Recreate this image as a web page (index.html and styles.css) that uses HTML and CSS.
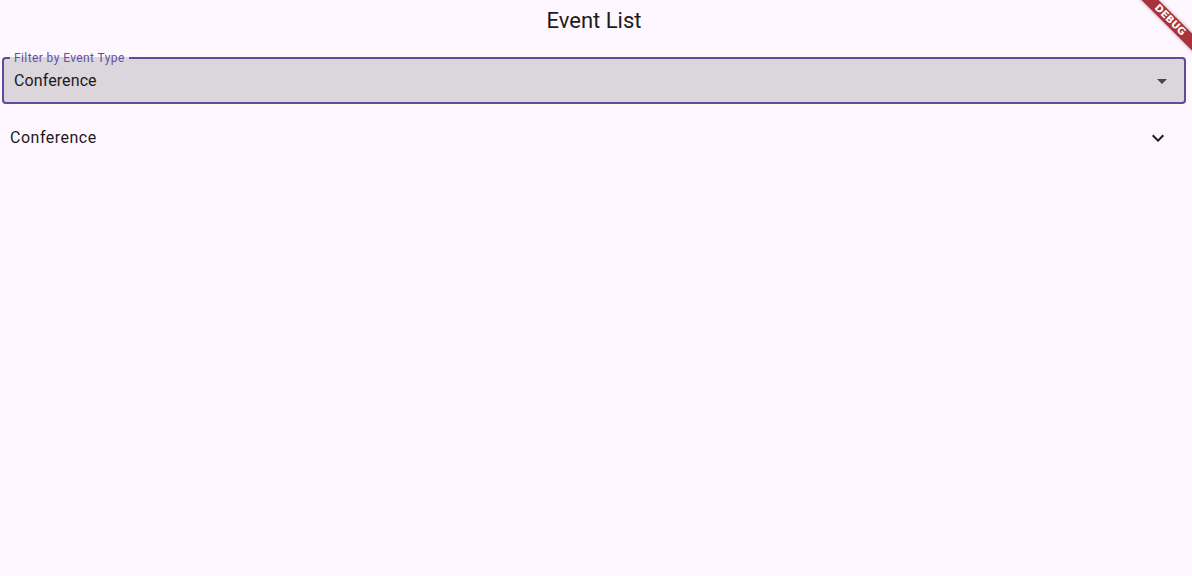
FILE: index.html
```html
<!DOCTYPE html>
<html>
<head>
<meta charset="utf-8">
<title>Event List</title>
<link rel="stylesheet" href="styles.css">
</head>
<body>
<div class="app">
  <header class="appbar">
    <h1 class="title">Event List</h1>
  </header>
  <main class="content">
    <fieldset class="field">
      <legend class="field-label">Filter by Event Type</legend>
      <div class="field-row">
        <span class="field-value">Conference</span>
        <svg class="icon" viewBox="0 0 24 24" width="24" height="24"><path d="M7 10l5 5 5-5z" fill="#49454F"/></svg>
      </div>
    </fieldset>
    <div class="tile">
      <span class="tile-title">Conference</span>
      <svg class="icon" viewBox="0 0 24 24" width="24" height="24"><path d="M16.59 8.59L12 13.17 7.41 8.59 6 10l6 6 6-6z" fill="#1D1B20"/></svg>
    </div>
  </main>
  <div class="debug-banner">DEBUG</div>
</div>
</body>
</html>
```
FILE: styles.css
```css
html, body {
  margin: 0;
  padding: 0;
  background: #FEF7FF;
}
body {
  font-family: Roboto, "Noto Sans", sans-serif;
  color: #1D1B20;
  width: 1192px;
  height: 576px;
  overflow: hidden;
}
.app {
  position: relative;
  width: 1192px;
  height: 576px;
  overflow: hidden;
}
.appbar {
  height: 42px;
  display: flex;
  align-items: center;
  justify-content: center;
  padding-right: 4px;
}
.title {
  margin: 0;
  font-size: 22px;
  font-weight: 400;
  line-height: 28px;
  color: #1D1B20;
}
.content {
  padding-top: 9px;
}
.field {
  margin: 0 6px 0 2px;
  padding: 0 10px 6px 10px;
  border: 2px solid #5E4B9C;
  border-radius: 4px;
  background: #DBD5DC;
  min-inline-size: 0;
}
.field-label {
  font-size: 12px;
  line-height: 14px;
  color: #6750A4;
  padding: 0 4px;
  margin-left: -4px;
  letter-spacing: 0.4px;
}
.field-row {
  height: 31px;
  display: flex;
  align-items: center;
  justify-content: space-between;
}
.field-value {
  font-size: 16px;
  line-height: 20px;
  letter-spacing: 0.1px;
}
.tile {
  margin-top: 10px;
  height: 48px;
  display: flex;
  align-items: center;
  justify-content: space-between;
  padding: 0 22px 0 10px;
}
.tile-title {
  font-size: 16px;
  line-height: 20px;
  letter-spacing: 0.5px;
}
.icon {
  display: block;
  flex: none;
}
.debug-banner {
  position: absolute;
  top: 14px;
  right: -38px;
  width: 120px;
  height: 12px;
  background: #A8333D;
  color: #fff;
  font-family: "DejaVu Sans", sans-serif;
  font-size: 10px;
  font-weight: 900;
  line-height: 12px;
  text-align: center;
  transform: rotate(45deg);
  box-shadow: 0 0 4px rgba(0, 0, 0, 0.35);
}
```
